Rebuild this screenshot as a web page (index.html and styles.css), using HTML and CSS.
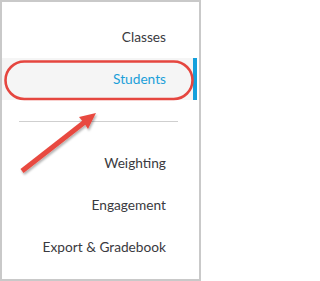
FILE: index.html
```html
<!DOCTYPE html>
<html>
<head>
<meta charset="utf-8">
<link rel="stylesheet" href="styles.css">
</head>
<body>
<div class="frame">
  <ul class="nav">
    <li class="item">Classes</li>
    <li class="item active">Students</li>
    <li class="sep"><span class="line"></span></li>
    <li class="item">Weighting</li>
    <li class="item">Engagement</li>
    <li class="item">Export &amp; Gradebook</li>
  </ul>
  <svg class="overlay" width="201" height="281" viewBox="0 0 201 281">
    <defs>
      <filter id="sh" x="-20%" y="-20%" width="140%" height="140%">
        <feDropShadow dx="1" dy="2" stdDeviation="1.2" flood-color="#000" flood-opacity="0.3"/>
      </filter>
    </defs>
    <rect x="5.5" y="61.5" width="187" height="37.5" rx="18.75" ry="18.75" fill="none" stroke="#e5463f" stroke-width="2.6"/>
    <g filter="url(#sh)">
      <line x1="22" y1="171" x2="86" y2="121" stroke="#e84a40" stroke-width="5"/>
      <polygon points="96,113 88,129 84,123 79,117" fill="#e84a40"/>
    </g>
  </svg>
</div>
</body>
</html>
```
FILE: styles.css
```css
html, body {
  margin: 0;
  padding: 0;
  background: #fff;
}
.frame {
  position: relative;
  width: 201px;
  height: 281px;
  box-sizing: border-box;
  border: 2px solid #c9c9c9;
  background: #fff;
  font-family: "Lato", "Liberation Sans", sans-serif;
}
.nav {
  list-style: none;
  margin: 0;
  padding: 14px 2px 0 0;
  display: flex;
  flex-direction: column;
}
.item {
  height: 42px;
  line-height: 42px;
  text-align: right;
  padding-right: 31px;
  font-size: 13.7px;
  color: #3a3a40;
}
.item.active {
  background: #f5f5f5;
  color: #1b9fd9;
  border-right: 4px solid #14a0dc;
  padding-right: 27px;
}
.sep {
  height: 42px;
  display: flex;
  align-items: center;
  padding: 0 19px 0 17px;
}
.line {
  flex: 1;
  height: 1px;
  background: #cfcfcf;
}
.overlay {
  position: absolute;
  left: -2px;
  top: -2px;
  pointer-events: none;
}
```
